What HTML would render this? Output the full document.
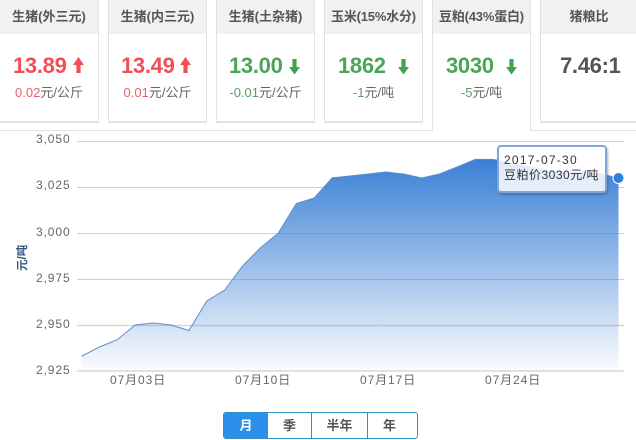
<!DOCTYPE html>
<html lang="zh">
<head>
<meta charset="utf-8">
<style>
html,body{margin:0;padding:0;background:#fff}
body{width:636px;height:440px;position:relative;overflow:hidden;font-family:"Liberation Sans","Noto Sans CJK SC",sans-serif}
.card{position:absolute;top:-2px;height:123px;width:97px;border:1px solid #e2e2e2;border-top:0;border-bottom-width:2px;background:#fff;text-align:center}
.hd{height:36px;background:#f1f1f1;font-size:13px;line-height:38px;color:#555;font-weight:bold;white-space:nowrap}
.val{position:absolute;left:0;top:55px;font-size:22px;line-height:26px;font-weight:bold;white-space:nowrap;letter-spacing:-.3px}
.sub{position:absolute;left:0;right:0;top:86px;font-size:13px;line-height:18px;color:#666;white-space:nowrap}
.r{color:#ef5058}.g{color:#4aa556}
.sr{color:#e8606a}.sg{color:#5f9a68}
.arrow{position:absolute;top:59px}
.tip{position:absolute;left:497px;top:145px;width:106px;height:44px;border:2px solid #7ea6d8;border-radius:4px;background:rgba(255,255,255,.85);box-shadow:1px 2px 2px rgba(60,80,120,.45);font-size:12px;line-height:15px;color:#333;padding:0;white-space:nowrap}
.tip div{padding-left:5px}
.btns{position:absolute;left:223px;top:412px;width:193px;height:25px;border:1px solid #2d8fc6;border-radius:3px;display:block;overflow:hidden}
.btns span{position:absolute;top:0;height:25px;line-height:26px;text-align:center;font-size:13px;font-weight:bold;color:#555}
</style>
</head>
<body>
<!-- tab baseline -->
<div style="position:absolute;left:0;top:130px;width:433px;height:1px;background:#e2e2e2"></div>
<div style="position:absolute;left:530px;top:130px;width:106px;height:1px;background:#e2e2e2"></div>

<div class="card" style="left:-1px;width:98px">
  <div class="hd">生猪(外三元)</div>
  <div class="val r" style="left:13px">13.89</div>
  <svg class="arrow" style="left:72px" width="13" height="20" viewBox="0 0 13 20"><path d="M6.500 0L12 8H8.600V16H4.400V8H1Z" fill="#ef5058"/></svg>
  <div class="sub"><span class="sr">0.02</span>元/公斤</div>
</div>
<div class="card" style="left:108px">
  <div class="hd">生猪(内三元)</div>
  <div class="val r" style="left:12px">13.49</div>
  <svg class="arrow" style="left:70px" width="13" height="20" viewBox="0 0 13 20"><path d="M6.500 0L12 8H8.600V16H4.400V8H1Z" fill="#ef5058"/></svg>
  <div class="sub"><span class="sr">0.01</span>元/公斤</div>
</div>
<div class="card" style="left:216px">
  <div class="hd">生猪(土杂猪)</div>
  <div class="val g" style="left:12px">13.00</div>
  <svg class="arrow" style="left:71px" width="13" height="20" viewBox="0 0 13 20"><path d="M4.400 2H8.600V10H12L6.500 17.500L1 10H4.400Z" fill="#3fa34d"/></svg>
  <div class="sub"><span class="sg">-0.01</span>元/公斤</div>
</div>
<div class="card" style="left:324px">
  <div class="hd" style="letter-spacing:-.2px">玉米(15%水分)</div>
  <div class="val g" style="left:13px">1862</div>
  <svg class="arrow" style="left:72px" width="13" height="20" viewBox="0 0 13 20"><path d="M4.400 2H8.600V10H12L6.500 17.500L1 10H4.400Z" fill="#3fa34d"/></svg>
  <div class="sub"><span class="sg">-1</span>元/吨</div>
</div>
<div class="card" style="left:432px;height:132px;border-bottom:0">
  <div class="hd" style="letter-spacing:-.2px">豆粕(43%蛋白)</div>
  <div class="val g" style="left:13px">3030</div>
  <svg class="arrow" style="left:72px" width="13" height="20" viewBox="0 0 13 20"><path d="M4.400 2H8.600V10H12L6.500 17.500L1 10H4.400Z" fill="#3fa34d"/></svg>
  <div class="sub"><span class="sg">-5</span>元/吨</div>
</div>
<div class="card" style="left:540px;width:110px">
  <div class="hd" style="width:96px">猪粮比</div>
  <div class="val" style="left:19px;color:#555">7.46:1</div>
</div>

<svg style="position:absolute;left:0;top:0" width="636" height="440" viewBox="0 0 636 440">
  <defs>
    <linearGradient id="a" x1="0" y1="159" x2="0" y2="371" gradientUnits="userSpaceOnUse">
      <stop offset="0" stop-color="#3a7fd5"/>
      <stop offset="1" stop-color="#3a7fd5" stop-opacity=".02"/>
    </linearGradient>
  </defs>
  <g stroke="#d0d0d0" stroke-width="1">
    <path d="M77 141.500H624M77 187.500H624M77 233.500H624M77 279.500H624"/>
    <path d="M77 325.500H624M77 371H624" stroke-width="1.500" stroke="#d8d8d8"/>
  </g>
  <path fill="url(#a)" d="M81.500 356.300L99.400 347L117.300 339.700L135.200 325L153.100 323L171 325L188.900 330.500L206.800 301L224.700 290L242.600 266L260.500 247.700L278.400 233L296.300 203.600L314.200 198L332.100 177.800L350 176L367.900 174L385.800 172L403.700 174L421.600 178L439.500 174L457.400 166.800L475.300 159.400L493.200 159.400L511.100 163L529 166.800L546.900 170L564.800 172L582.700 172L600.600 174L618.500 178V371H81.500Z"/>
  <path fill="none" stroke="#5d8fc9" stroke-width="1" d="M81.500 356.300L99.400 347L117.300 339.700L135.200 325L153.100 323L171 325L188.900 330.500L206.800 301L224.700 290L242.600 266L260.500 247.700L278.400 233L296.300 203.600L314.200 198L332.100 177.800L350 176L367.900 174L385.800 172L403.700 174L421.600 178L439.500 174L457.400 166.800L475.300 159.400L493.200 159.400L511.100 163L529 166.800L546.900 170L564.800 172L582.700 172L600.600 174L618.500 178"/>
  <g font-family="Liberation Sans, Noto Sans CJK SC, sans-serif" font-size="12" fill="#666" letter-spacing=".9">
    <text x="36" y="143">3,050</text>
    <text x="36" y="189">3,025</text>
    <text x="36" y="236">3,000</text>
    <text x="36" y="282">2,975</text>
    <text x="36" y="328">2,950</text>
    <text x="36" y="374">2,925</text>
    <text x="110" y="384">07月03日</text>
    <text x="235" y="384">07月10日</text>
    <text x="360" y="384">07月17日</text>
    <text x="485" y="384">07月24日</text>
  </g>
  <text transform="translate(26 271) rotate(-90)" font-family="Liberation Sans, Noto Sans CJK SC, sans-serif" font-size="11.500" font-weight="bold" fill="#34557f">元/吨</text>
  <circle cx="618.500" cy="178" r="5.500" fill="#2f7fdc" stroke="#fff" stroke-width="1"/>
</svg>

<div class="tip">
  <div style="padding-top:6px;letter-spacing:1.250px">2017-07-30</div>
  <div style="letter-spacing:.5px">豆粕价3030元/吨</div>
</div>

<div class="btns">
  <span style="left:0;width:44px;background:#2a90ea;color:#fff">月</span>
  <span style="left:44px;width:43px">季</span>
  <span style="left:87px;width:1px;background:#2d8fc6"></span>
  <span style="left:88px;width:55px">半年</span>
  <span style="left:143px;width:1px;background:#2d8fc6"></span>
  <span style="left:144px;width:43px">年</span>
</div>
</body>
</html>
